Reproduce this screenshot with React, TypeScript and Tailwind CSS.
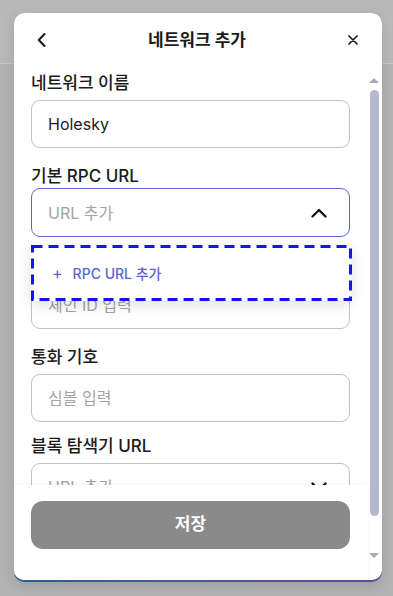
export default function App() {
  const font = { fontFamily: 'Inter, "Noto Sans CJK KR", sans-serif' }

  return (
    <div className="relative h-[596px] w-[393px] overflow-hidden bg-[#b3b3b3]" style={font}>
      {/* page behind the overlay */}
      <div className="h-[64px] border-b border-[#c6c6c6] bg-[#b9b9ba]" />

      {/* modal layer */}
      <div className="absolute inset-0 flex pl-[14px] pt-[13px]">
        <div className="h-[569px] w-[368px] rounded-[10px] bg-gradient-to-r from-[#2d5f8e] to-[#5d4a9c] pb-[2px] shadow-[0_4px_14px_rgba(0,0,0,0.12)]">
          <div className="flex h-full flex-col overflow-hidden rounded-[10px] bg-white">
            {/* Header */}
            <div className="grid h-[54px] shrink-0 grid-cols-[20px_1fr_20px] items-center pl-[17px] pr-[19px]">
              <button className="flex h-5 w-5 items-center justify-center">
                <svg width="9" height="14" viewBox="0 0 9 14" fill="none">
                  <path d="M7.5 1 L1.8 7 L7.5 13" stroke="#1a1a1a" strokeWidth="2" strokeLinecap="round" strokeLinejoin="round" />
                </svg>
              </button>
              <h1 className="text-center text-[17px] font-bold leading-6 text-[#1b1b1b]">네트워크 추가</h1>
              <button className="flex h-5 w-5 items-center justify-center">
                <svg width="10" height="10" viewBox="0 0 10 10" fill="none">
                  <path d="M1 1 L9 9 M9 1 L1 9" stroke="#1a1a1a" strokeWidth="1.7" strokeLinecap="round" />
                </svg>
              </button>
            </div>

            {/* Body */}
            <div className="flex min-h-0 flex-1">
              <div className="flex min-w-0 flex-1 flex-col">
                {/* scrolling content */}
                <div className="min-h-0 flex-1 overflow-hidden pl-[17px] pr-[18px] pt-[6px]">
                  <label className="block text-[17px] font-medium leading-5 text-[#1b1b1b]">네트워크 이름</label>
                  <div className="mt-[7px] flex h-[48px] items-center rounded-[9px] border border-[#c2c2c6] px-4 text-[16px] text-[#1b1b1b]">
                    Holesky
                  </div>

                  <label className="mt-[18px] block text-[17px] font-medium leading-5 text-[#1b1b1b]">기본 RPC URL</label>
                  <div className="relative mt-[2px]">
                    <div className="flex h-[49px] items-center justify-between rounded-[9px] border border-[#5867d6] pl-4 pr-[22px]">
                      <span className="text-[16px] text-[#a3a3a8]">URL 추가</span>
                      <svg width="16" height="10" viewBox="0 0 16 10" fill="none">
                        <path d="M1.5 8.5 L8 2 L14.5 8.5" stroke="#111" strokeWidth="2.3" strokeLinecap="round" strokeLinejoin="round" />
                      </svg>
                    </div>

                    {/* dropdown */}
                    <div className="absolute left-0 top-full z-10 mt-[8px] flex h-[56px] w-[321px] items-center gap-[10px] rounded-[6px] bg-white pl-[21px] shadow-[0_4px_14px_rgba(0,0,0,0.12)]">
                      <span className="text-[16px] leading-none text-[#5a66cf]">+</span>
                      <span className="text-[14px] font-medium text-[#5a66cf]">RPC URL 추가</span>
                      {/* dashed focus ring */}
                      <svg className="pointer-events-none absolute inset-0" width="321" height="56" fill="none">
                        <rect x="1.5" y="1.5" width="318" height="53" stroke="#1414f0" strokeWidth="3" strokeDasharray="10 6" />
                      </svg>
                    </div>
                  </div>

                  <label className="mt-[17px] block text-[17px] font-medium leading-5 text-[#1b1b1b]">체인 ID</label>
                  <div className="mt-[7px] flex h-[48px] items-center rounded-[9px] border border-[#c2c2c6] px-4 text-[16px] text-[#a3a3a8]">
                    체인 ID 입력
                  </div>

                  <label className="mt-[18px] block text-[17px] font-medium leading-5 text-[#1b1b1b]">통화 기호</label>
                  <div className="mt-[7px] flex h-[48px] items-center rounded-[9px] border border-[#c2c2c6] px-4 text-[16px] text-[#a3a3a8]">
                    심볼 입력
                  </div>

                  <label className="mt-[14px] block text-[17px] font-medium leading-5 text-[#1b1b1b]">블록 탐색기 URL</label>
                  <div className="mt-[7px] flex h-[48px] items-center justify-between rounded-[9px] border border-[#c2c2c6] pl-4 pr-[22px]">
                    <span className="text-[16px] text-[#a3a3a8]">URL 추가</span>
                    <svg width="16" height="10" viewBox="0 0 16 10" fill="none">
                      <path d="M1.5 1.5 L8 8 L14.5 1.5" stroke="#111" strokeWidth="2.3" strokeLinecap="round" strokeLinejoin="round" />
                    </svg>
                  </div>
                </div>

                {/* Footer */}
                <div className="h-[95px] shrink-0 bg-white pl-[17px] pr-[18px] pt-[16px] shadow-[0_-2px_4px_rgba(0,0,0,0.04)]">
                  <button className="flex h-[48px] w-full items-center justify-center rounded-[12px] bg-[#8a8a8a] text-[17px] font-bold text-white">
                    저장
                  </button>
                </div>
              </div>

              {/* scrollbar */}
              <div className="flex w-[14px] shrink-0 flex-col items-center pr-[2px] pt-[11px]">
                <div className="h-0 w-0 border-x-[5px] border-b-[5px] border-x-transparent border-b-[#a6a9b8]" />
                <div className="mt-[7px] h-[426px] w-[9px] rounded-full bg-[#b5b8cb]" />
                <div className="mt-[37px] h-0 w-0 border-x-[5px] border-t-[5px] border-x-transparent border-t-[#a6a9b8]" />
              </div>
            </div>
          </div>
        </div>
      </div>
    </div>
  )
}
